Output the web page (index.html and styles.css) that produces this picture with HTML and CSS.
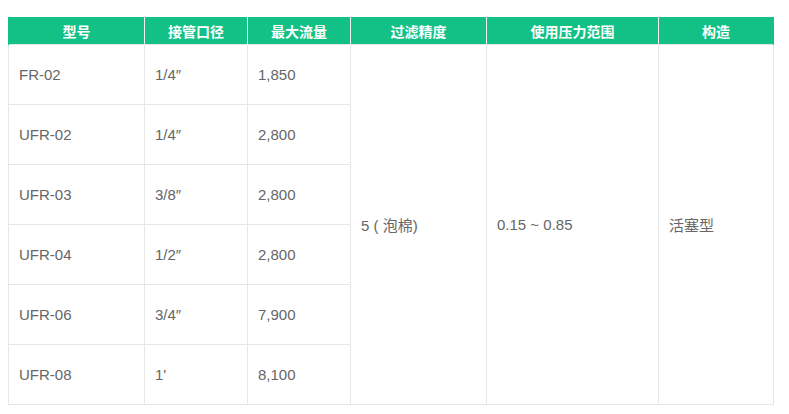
FILE: index.html
```html
<!DOCTYPE html>
<html lang="zh-CN">
<head>
<meta charset="utf-8">
<link rel="stylesheet" href="styles.css">
</head>
<body>
<table class="spec">
  <colgroup>
    <col class="c1"><col class="c2"><col class="c3"><col class="c4"><col class="c5"><col class="c6">
  </colgroup>
  <thead>
    <tr><th>型号</th><th>接管口径</th><th>最大流量</th><th>过滤精度</th><th>使用压力范围</th><th>构造</th></tr>
  </thead>
  <tbody>
    <tr><td>FR-02</td><td>1/4″</td><td>1,850</td><td rowspan="6">5 ( 泡棉)</td><td rowspan="6">0.15 ~ 0.85</td><td rowspan="6">活塞型</td></tr>
    <tr><td>UFR-02</td><td>1/4″</td><td>2,800</td></tr>
    <tr><td>UFR-03</td><td>3/8″</td><td>2,800</td></tr>
    <tr><td>UFR-04</td><td>1/2″</td><td>2,800</td></tr>
    <tr><td>UFR-06</td><td>3/4″</td><td>7,900</td></tr>
    <tr><td>UFR-08</td><td>1'</td><td>8,100</td></tr>
  </tbody>
</table>
</body>
</html>
```
FILE: styles.css
```css
html, body {
  margin: 0;
  padding: 0;
  background: #fff;
}
body {
  padding: 17px 8px 0 8px;
  font-family: "Liberation Sans", Arial, "Noto Sans CJK SC", sans-serif;
}
.spec {
  border-collapse: collapse;
  table-layout: fixed;
  width: 765px;
}
.c1 { width: 136px; }
.c2 { width: 103px; }
.c3 { width: 103px; }
.c4 { width: 136px; }
.c5 { width: 172px; }
.c6 { width: 115px; }
.spec th {
  background: #13c186;
  color: #fff;
  font-weight: bold;
  font-size: 14px;
  height: 27px;
  padding: 0;
  text-align: center;
  border: 1px solid #f1eef0;
  border-top: none;
  border-bottom: none;
  font-family: "Noto Sans CJK SC", sans-serif;
}
.spec th:first-child { border-left-color: #13c186; }
.spec th:last-child { border-right-color: #13c186; }
.spec tbody tr { height: 60px; }
.spec td {
  border: 1px solid #e6e6e6;
  color: #666;
  font-size: 15px;
  padding: 0 0 0 10px;
  vertical-align: middle;
  text-align: left;
}
```
